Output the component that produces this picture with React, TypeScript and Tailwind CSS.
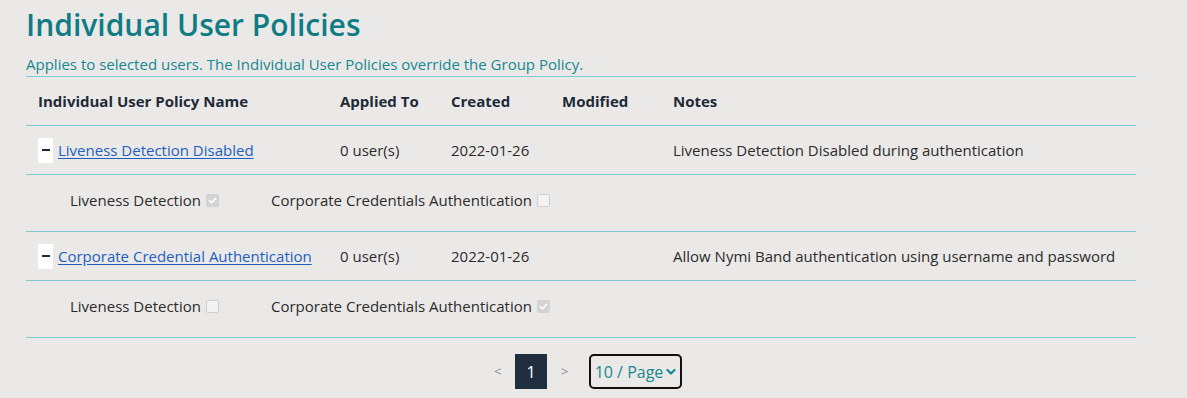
import React from 'react';

const policies = [
  {
    name: 'Liveness Detection Disabled',
    applied: '0 user(s)',
    created: '2022-01-26',
    modified: '',
    notes: 'Liveness Detection Disabled during authentication',
    liveness: true,
    corporate: false,
  },
  {
    name: 'Corporate Credential Authentication',
    applied: '0 user(s)',
    created: '2022-01-26',
    modified: '',
    notes: 'Allow Nymi Band authentication using username and password',
    liveness: false,
    corporate: true,
  },
];

const Check = ({ checked }: { checked: boolean }) => (
  <span
    className={
      'ml-[5px] inline-flex h-[13px] w-[13px] items-center justify-center rounded-[2px] border ' +
      (checked ? 'border-[#d3d3d3] bg-[#d3d3d3]' : 'border-[#cfcfcf] bg-[#f3f3f3]')
    }
  >
    {checked && (
      <svg width="9" height="9" viewBox="0 0 10 10" fill="none">
        <path d="M1.5 5.2 L4 7.5 L8.5 2.5" stroke="#fff" strokeWidth="1.8" strokeLinecap="round" strokeLinejoin="round" />
      </svg>
    )}
  </span>
);

const cols = 'grid grid-cols-[302px_111px_111px_111px_1fr]';

export default function App() {
  return (
    <div className="min-h-[398px] bg-[#ebe9e7] pl-[26px] font-['Segoe_UI','Open_Sans',sans-serif] text-[15px] text-[#2b2b2b]">
      <div className="w-[1110px]">
        <h1 className="pt-[4px] text-[30px] leading-[41px] font-semibold text-[#0f7c84]">Individual User Policies</h1>
        <p className="mt-[9px] border-b border-[#7fc9d4] pb-[2px] text-[15px] leading-[20px] text-[#168892]">
          Applies to selected users. The Individual User Policies override the Group Policy.
        </p>

        <div className={cols + ' h-[49px] items-center border-b border-[#7fc9d4] font-bold text-[#1f2937]'}>
          <div className="pl-[12px]">Individual User Policy Name</div>
          <div className="pl-[12px]">Applied To</div>
          <div className="pl-[12px]">Created</div>
          <div className="pl-[12px]">Modified</div>
          <div className="pl-[12px]">Notes</div>
        </div>

        {policies.map((p) => (
          <div key={p.name}>
            <div className={cols + ' h-[49px] items-center border-b border-[#7fc9d4]'}>
              <div className="flex items-center pl-[12px]">
                <span className="flex h-[25px] w-[15px] items-center justify-center bg-white">
                  <span className="h-[2px] w-[8px] bg-[#1f2937]" />
                </span>
                <a href="#" className="ml-[5px] text-[#1d5fc0] underline underline-offset-2">
                  {p.name}
                </a>
              </div>
              <div className="pl-[12px]">{p.applied}</div>
              <div className="pl-[12px]">{p.created}</div>
              <div className="pl-[12px]">{p.modified}</div>
              <div className="pl-[12px]">{p.notes}</div>
            </div>
            <div className="flex h-[57px] items-center border-b border-[#7fc9d4] pb-[6px] pl-[44px]">
              <span className="flex w-[201px] items-center">
                Liveness Detection
                <Check checked={p.liveness} />
              </span>
              <span className="flex items-center">
                Corporate Credentials Authentication
                <Check checked={p.corporate} />
              </span>
            </div>
          </div>
        ))}

        <div className="mt-[16px] flex items-center justify-center pl-[14px]">
          <span className="w-[21px] text-[13px] text-[#8a8a8a]">&lt;</span>
          <span className="flex h-[35px] w-[32px] items-center justify-center bg-[#1f2f40] text-[16px] text-white">1</span>
          <span className="w-[42px] pl-[14px] text-[13px] text-[#8a8a8a]">&gt;</span>
          <span className="flex h-[35px] w-[93px] items-center justify-center gap-[3px] rounded-[5px] border-2 border-[#111] text-[16px] text-[#168892]">
            10 / Page
            <svg width="10" height="8" viewBox="0 0 10 8" fill="none">
              <path d="M1.5 2 L5 5.5 L8.5 2" stroke="#168892" strokeWidth="2.2" strokeLinecap="round" strokeLinejoin="round" />
            </svg>
          </span>
        </div>
      </div>
    </div>
  );
}
